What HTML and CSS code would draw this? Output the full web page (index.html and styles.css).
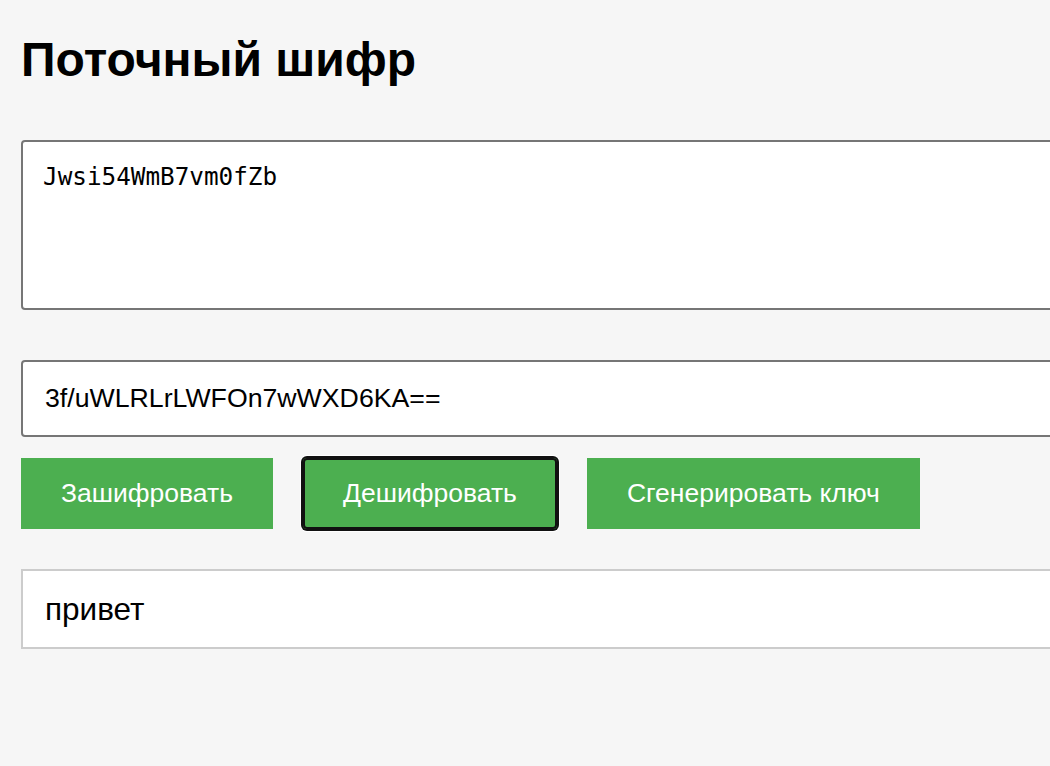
FILE: index.html
```html
<!DOCTYPE html>
<html lang="ru">
<head>
<meta charset="utf-8">
<title>Поточный шифр</title>
<link rel="stylesheet" href="styles.css">
</head>
<body>
<main class="page">
  <h1 class="title">Поточный шифр</h1>
  <textarea class="key-field">Jwsi54WmB7vm0fZb</textarea>
  <input class="text-field" type="text" value="3f/uWLRLrLWFOn7wWXD6KA==">
  <div class="actions">
    <button class="btn">Зашифровать</button>
    <button class="btn btn-focused">Дешифровать</button>
    <button class="btn">Сгенерировать ключ</button>
  </div>
  <div class="result">привет</div>
</main>
</body>
</html>
```

FILE: styles.css
```css
html, body {
  margin: 0;
  padding: 0;
  background: #f6f6f6;
  overflow: hidden;
}

.page {
  padding: 32px 0 0 21px;
  font-family: "Liberation Sans", Arial, sans-serif;
  color: #000;
  display: flex;
  flex-direction: column;
  align-items: flex-start;
}

.title {
  margin: 0 0 52px 0;
  font-size: 48px;
  line-height: 56px;
  font-weight: bold;
}

.key-field {
  box-sizing: border-box;
  width: 1080px;
  height: 170px;
  margin: 0 0 50px 0;
  padding: 21px 20px;
  border: 2px solid #767676;
  border-radius: 4px;
  background: #fff;
  font-family: "DejaVu Sans Mono", monospace;
  font-size: 24.3px;
  line-height: 28px;
  color: #000;
  resize: none;
  outline: none;
}

.text-field {
  box-sizing: border-box;
  width: 1080px;
  height: 77px;
  margin: 0 0 21px 0;
  padding: 0 22px;
  border: 2px solid #767676;
  border-radius: 4px;
  background: #fff;
  font-family: "Liberation Sans", Arial, sans-serif;
  font-size: 26.7px;
  color: #000;
  outline: none;
}

.actions {
  display: flex;
  gap: 30px;
  margin-bottom: 40px;
}

.btn {
  height: 71px;
  padding: 0 40px;
  border: none;
  background: #4caf50;
  color: #fff;
  font-family: "Liberation Sans", Arial, sans-serif;
  font-size: 26.5px;
}

.btn-focused {
  border-radius: 4px;
  box-shadow: inset 0 0 0 2px #111, 0 0 0 2px #111, 0 0 0 3px #fff;
}

.result {
  box-sizing: border-box;
  width: 1080px;
  height: 80px;
  padding: 0 22px;
  border: 2px solid #cccccc;
  background: #fff;
  font-size: 31.5px;
  line-height: 76px;
}
```
